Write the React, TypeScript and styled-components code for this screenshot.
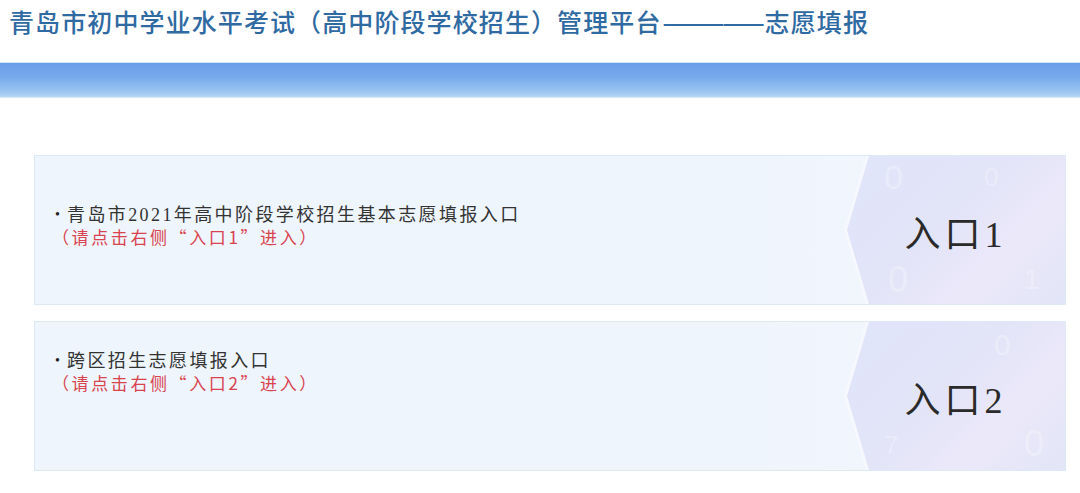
import styled, { createGlobalStyle } from "styled-components";

const GlobalStyle = createGlobalStyle`
  html, body {
    margin: 0;
    padding: 0;
    background: #ffffff;
  }
  body {
    font-family: "Liberation Serif", "Noto Sans CJK SC", serif;
  }
`;

const Page = styled.div`
  width: 1080px;
  height: 493px;
  overflow: hidden;
  background: #ffffff;
`;

const Header = styled.header`
  height: 62px;
  display: flex;
  align-items: flex-start;
  padding-left: 9px;
`;

const Title = styled.h1`
  margin: 6px 0 0;
  font-family: "Noto Sans CJK SC", sans-serif;
  font-size: 25px;
  font-weight: 500;
  letter-spacing: 1.1px;
  line-height: 30px;
  color: #2f6aa2;
  white-space: nowrap;
`;

/* the long dash in the title is drawn as one unbroken run */
const Dashes = styled.span`
  display: inline-block;
  letter-spacing: -2px;
  margin: 0 2px 0 1px;
`;

const Band = styled.div`
  height: 36px;
  border-top: 1px solid #d4e4f6;
  border-bottom: 1px solid #d6e7f8;
  box-sizing: border-box;
  background: linear-gradient(to bottom, #6a9ee9 0%, #76a9ec 40%, #9cc6f1 85%, #b3d6f5 100%);
`;

const Main = styled.main`
  display: flex;
  flex-direction: column;
  gap: 16px;
  padding: 57px 14px 0 34px;
`;

const Card = styled.section`
  height: 150px;
  display: flex;
  border: 1px solid #dde9f4;
  box-sizing: border-box;
  background: linear-gradient(to right, #eef5fc 0%, #eff5fd 70%, #f4f8fe 100%);
`;

const Info = styled.div<{ $top?: boolean }>`
  flex: 1;
  display: flex;
  flex-direction: column;
  justify-content: ${(p) => (p.$top ? "flex-start" : "center")};
  padding: ${(p) => (p.$top ? "28px" : "0")} 0 ${(p) => (p.$top ? "0" : "8px")} 20px;
`;

const Line = styled.div`
  display: flex;
  align-items: center;
  font-size: 18px;
  line-height: 22px;
  letter-spacing: 2.4px;
  color: #333333;
`;

const Bullet = styled.span`
  width: 12px;
  font-size: 14px;
  color: #222;
`;

const Hint = styled.div`
  margin-left: -3px;
  font-family: "Noto Sans CJK SC", sans-serif;
  font-size: 17px;
  line-height: 22px;
  letter-spacing: 2.6px;
  color: #d9434f;
`;

const Entry = styled.a`
  position: relative;
  width: 221px;
  flex-shrink: 0;
  display: flex;
  align-items: center;
  justify-content: center;
  text-decoration: none;
  cursor: pointer;
  clip-path: polygon(22px 0, 100% 0, 100% 100%, 22px 100%, 0 50%);
  background: #f6f8fe;
  overflow: hidden;

  &::before {
    content: "";
    position: absolute;
    inset: 0;
    clip-path: polygon(25px 0, 100% 0, 100% 100%, 25px 100%, 3px 50%);
    background: linear-gradient(135deg, #dfe5f9 0%, #e3e4f8 45%, #ebe8f9 70%, #e2e5f7 100%);
  }
`;

/* faint numerals scattered over the entry panel */
const Digit = styled.span<{ $x: number; $y: number; $size: number }>`
  position: absolute;
  left: ${(p) => p.$x}px;
  top: ${(p) => p.$y}px;
  font-family: "Liberation Sans", sans-serif;
  font-size: ${(p) => p.$size}px;
  line-height: 1;
  color: rgba(255, 255, 255, 0.28);
  pointer-events: none;
`;

const EntryLabel = styled.span`
  position: relative;
  font-family: "Liberation Serif", "Noto Sans CJK SC", serif;
  font-size: 36px;
  letter-spacing: 4px;
  color: #2a2a2a;
  margin-left: 2px;
  margin-top: 2px;
`;

interface EntryItem {
  title: string;
  hint: string;
  label: string;
  top?: boolean;
  digits: { ch: string; x: number; y: number; size: number }[];
}

const entries: EntryItem[] = [
  {
    title: "青岛市2021年高中阶段学校招生基本志愿填报入口",
    hint: "（请点击右侧“入口1”进入）",
    label: "入口1",
    digits: [
      { ch: "0", x: 40, y: 4, size: 34 },
      { ch: "0", x: 140, y: 8, size: 26 },
      { ch: "0", x: 44, y: 106, size: 36 },
      { ch: "1", x: 180, y: 110, size: 28 },
    ],
  },
  {
    title: "跨区招生志愿填报入口",
    hint: "（请点击右侧“入口2”进入）",
    label: "入口2",
    top: true,
    digits: [
      { ch: "0", x: 150, y: 8, size: 30 },
      { ch: "7", x: 40, y: 110, size: 26 },
      { ch: "0", x: 180, y: 104, size: 36 },
    ],
  },
];

export default function App() {
  return (
    <Page>
      <GlobalStyle />
      <Header>
        <Title>
          青岛市初中学业水平考试（高中阶段学校招生）管理平台<Dashes>—————</Dashes>志愿填报
        </Title>
      </Header>
      <Band />
      <Main>
        {entries.map((e) => (
          <Card key={e.label}>
            <Info $top={e.top}>
              <Line>
                <Bullet>•</Bullet>
                {e.title}
              </Line>
              <Hint>{e.hint}</Hint>
            </Info>
            <Entry>
              {e.digits.map((d, i) => (
                <Digit key={i} $x={d.x} $y={d.y} $size={d.size}>
                  {d.ch}
                </Digit>
              ))}
              <EntryLabel>{e.label}</EntryLabel>
            </Entry>
          </Card>
        ))}
      </Main>
    </Page>
  );
}
